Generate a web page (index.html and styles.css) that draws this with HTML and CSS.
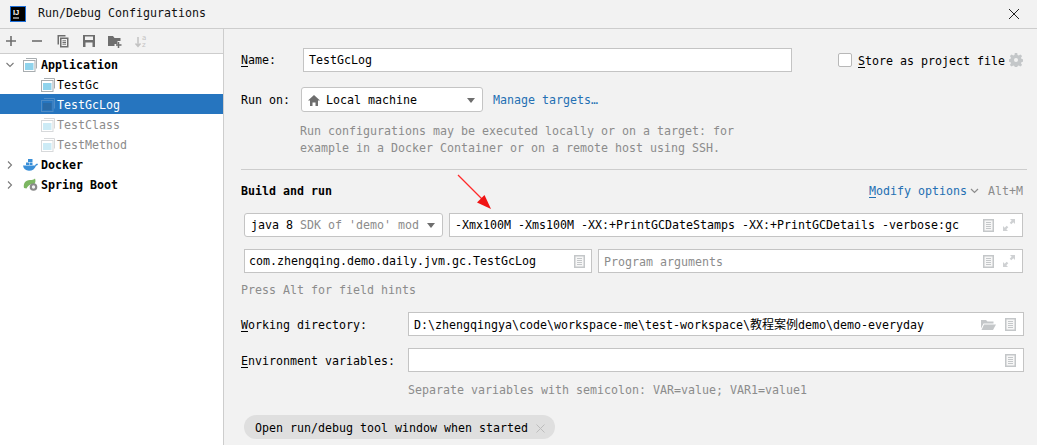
FILE: index.html
```html
<!DOCTYPE html>
<html lang="en">
<head>
<meta charset="utf-8">
<title>Run/Debug Configurations</title>
<link rel="stylesheet" href="styles.css">
</head>
<body>
<div class="dialog">
  <header class="titlebar">
    <svg class="logo" width="16" height="16" viewBox="0 0 16 16"><rect x=".5" y=".5" width="15" height="15" fill="#000" stroke="#1e6fd9"/><text x="3" y="9" class="logo-text">IJ</text><rect x="3" y="11.500" width="6" height="1" fill="#fff"/></svg>
    <span class="title">Run/Debug Configurations</span>
    <svg class="close" width="10" height="10" viewBox="0 0 10 10"><path d="M0 0L10 10M10 0L0 10" stroke="#222" stroke-width="1" fill="none"/></svg>
  </header>
  <div class="main">
    <aside class="sidebar">
      <div class="toolbar">
        <svg width="14" height="14" viewBox="0 0 14 14"><path d="M7 2v10M2 7h10" stroke="#6e6e6e" stroke-width="1.6"/></svg>
        <svg width="14" height="14" viewBox="0 0 14 14"><path d="M2 7h10" stroke="#6e6e6e" stroke-width="1.6"/></svg>
        <svg width="14" height="14" viewBox="0 0 14 14"><path d="M1.500 1h8v1.500h-6.500v8h-1.500z" fill="#6e6e6e"/><path d="M4 3.500h8.500v10h-8.500z" fill="#6e6e6e"/><path d="M5.500 5h5.500v7h-5.500z" fill="#f2f2f2"/><path d="M6.500 6.800h3.500M6.500 8.500h3.500M6.500 10.200h3.500" stroke="#6e6e6e"/></svg>
        <svg width="14" height="14" viewBox="0 0 14 14"><path d="M1 1h12v12h-12z" fill="#6e6e6e"/><path d="M3 2.500h8v3.500h-8zM3.500 8.500h7v4.500h-7z" fill="#f2f2f2"/></svg>
        <svg width="14" height="14" viewBox="0 0 14 14"><path d="M0 2h5l1.500 2h6v3h-3v3h-3v2h-6.500z" fill="#6e6e6e"/><path d="M10.500 8v6M8 11h5.500" stroke="#6e6e6e" stroke-width="1.500"/></svg>
        <svg width="14" height="14" viewBox="0 0 14 14"><path d="M4 3v9M1.500 9.500l2.500 2.800 2.500-2.800" stroke="#c2c2c2" stroke-width="1.500" fill="none"/><text x="8" y="6" class="sort-text">a</text><text x="8" y="13" class="sort-text">z</text></svg>
      </div>
      <ul class="tree">
        <li class="row lvl1 bold"><svg class="chev" width="8" height="8" viewBox="0 0 8 8"><path d="M.5 2l3.500 3.500 3.500-3.500" stroke="#7a7a7a" stroke-width="1.100" fill="none"/></svg><svg class="ic" width="14" height="14" viewBox="0 0 14 14"><use href="#app"/></svg><span>Application</span></li>
        <li class="row lvl2"><svg class="ic" width="14" height="14" viewBox="0 0 14 14"><use href="#app"/></svg><span>TestGc</span></li>
        <li class="row lvl2 selected"><svg class="ic" width="14" height="14" viewBox="0 0 14 14"><path d="M3 0.500h10.500v10" fill="none" stroke="#4f8cc6"/><rect x=".5" y="2.500" width="11.500" height="11" fill="#2675bf" stroke="#4f8cc6"/><rect x="2" y="5" width="8.500" height="7" fill="#2a6aa6"/></svg><span>TestGcLog</span></li>
        <li class="row lvl2 muted"><svg class="ic faded" width="14" height="14" viewBox="0 0 14 14"><use href="#app"/></svg><span>TestClass</span></li>
        <li class="row lvl2 muted"><svg class="ic faded" width="14" height="14" viewBox="0 0 14 14"><use href="#app"/></svg><span>TestMethod</span></li>
        <li class="row lvl1 bold"><svg class="chev" width="8" height="8" viewBox="0 0 8 8"><path d="M2 .5l3.500 3.500-3.500 3.500" stroke="#7a7a7a" stroke-width="1.100" fill="none"/></svg><svg class="ic wide" width="16" height="14" viewBox="0 0 16 14"><path d="M0 7.500h12c.5-1.500 1.800-2 3-1.500-.4 1-1 1.500-2 1.700-1 3-3.500 5-7 5-3.500 0-5.500-2-6-5.200z" fill="#3a8fd8"/><rect x="3" y="4.500" width="3" height="2.500" fill="#3a8fd8"/><rect x="6.500" y="4.500" width="3" height="2.500" fill="#3a8fd8"/><rect x="5" y="1" width="4.500" height="3" fill="#3a8fd8"/></svg><span>Docker</span></li>
        <li class="row lvl1 bold"><svg class="chev" width="8" height="8" viewBox="0 0 8 8"><path d="M2 .5l3.500 3.500-3.500 3.500" stroke="#7a7a7a" stroke-width="1.100" fill="none"/></svg><svg class="ic wide" width="16" height="14" viewBox="0 0 16 14"><path d="M1 10c-1-4 1-8 6-8 2 0 4-.5 5-1.500.8 2 .5 4-.5 5.500h-3c-2 1-4 2-5 4.500z" fill="#7cb661"/><circle cx="10.500" cy="9" r="3.800" fill="#8a8a8a"/><circle cx="10.500" cy="9" r="1.700" fill="#f2f2f2"/></svg><span>Spring Boot</span></li>
      </ul>
    </aside>
    <section class="panel">
      <div class="row-name">
        <label class="lbl lbl-name"><u>N</u>ame:</label>
        <div class="field f-name">TestGcLog</div>
        <div class="store">
          <span class="checkbox"></span>
          <span class="store-text"><u>S</u>tore as project file</span>
          <svg class="gear" width="14" height="14" viewBox="0 0 14 14"><path d="M5.800 0h2.400l.3 1.900 1.300.6 1.600-1.100 1.700 1.700-1.100 1.600.6 1.300 1.900.3v2.400l-1.900.3-.6 1.300 1.100 1.600-1.700 1.700-1.600-1.100-1.300.6-.3 1.900h-2.400l-.3-1.900-1.300-.6-1.600 1.100-1.700-1.700 1.100-1.600-.6-1.300-1.900-.3v-2.400l1.900-.3.6-1.300-1.100-1.600 1.700-1.700 1.600 1.100 1.300-.6z" fill="#c4c7c9"/><circle cx="7" cy="7" r="2" fill="#f2f2f2"/></svg>
        </div>
      </div>
      <div class="row-run">
        <label class="lbl lbl-run">Run on:</label>
        <div class="combo c-run">
          <svg class="home" width="12" height="11" viewBox="0 0 12 11"><path d="M6 0l6 5.500h-2v5.500h-2.500v-3.500h-3v3.500h-2.500v-5.500h-2z" fill="#6e6e6e"/></svg>
          <span>Local machine</span>
          <i class="arrow"></i>
        </div>
        <a class="link">Manage targets…</a>
      </div>
      <p class="hint help">Run configurations may be executed locally or on a target: for<br>example in a Docker Container or on a remote host using SSH.</p>
      <hr class="sep">
      <div class="row-build">
        <strong class="bold">Build and run</strong>
        <div class="modify">
          <a class="link"><u>M</u>odify options</a>
          <svg width="9" height="6" viewBox="0 0 9 6"><path d="M1 1l3.500 3.500 3.500-3.500" stroke="#8c8c8c" stroke-width="1.200" fill="none"/></svg>
          <span class="shortcut">Alt+M</span>
        </div>
      </div>
      <div class="row-fields first">
        <div class="combo c-java"><span>java 8</span><span class="gray sdk">SDK of 'demo' mod</span><i class="arrow"></i></div>
        <div class="field f-grow"><span class="vm">-Xmx100M -Xms100M -XX:+PrintGCDateStamps -XX:+PrintGCDetails -verbose:gc</span>
          <span class="icons">
            <svg width="11" height="13" viewBox="0 0 11 13"><use href="#doc"/></svg>
            <svg width="12" height="12" viewBox="0 0 12 12"><use href="#expand"/></svg>
          </span>
        </div>
      </div>
      <div class="row-fields second">
        <div class="field f-main"><span class="vm">com.zhengqing.demo.daily.jvm.gc.TestGcLog</span><span class="icons"><svg width="11" height="13" viewBox="0 0 11 13"><use href="#doc"/></svg></span></div>
        <div class="field f-grow"><span class="placeholder">Program arguments</span>
          <span class="icons">
            <svg width="11" height="13" viewBox="0 0 11 13"><use href="#doc"/></svg>
            <svg width="12" height="12" viewBox="0 0 12 12"><use href="#expand"/></svg>
          </span>
        </div>
      </div>
      <p class="hint press">Press Alt for field hints</p>
      <div class="row-dir dir">
        <label class="lbl lbl-dir"><u>W</u>orking directory:</label>
        <div class="field f-grow"><span class="vm">D:\zhengqingya\code\workspace-me\test-workspace\<span class="cjk">教程案例</span>demo\demo-everyday</span>
          <span class="icons">
            <svg width="15" height="11" viewBox="0 0 15 11"><path d="M0 1h5l1.500 1.500h6v2h-10l-2.500 5z" fill="#c4c7c9"/><path d="M3 5.500h12l-3 5.500h-11.500z" fill="#c4c7c9"/></svg>
            <svg width="11" height="13" viewBox="0 0 11 13"><use href="#doc"/></svg>
          </span>
        </div>
      </div>
      <div class="row-dir env">
        <label class="lbl lbl-dir"><u>E</u>nvironment variables:</label>
        <div class="field f-grow"><span class="icons"><svg width="11" height="13" viewBox="0 0 11 13"><use href="#doc"/></svg></span></div>
      </div>
      <p class="hint sepvar">Separate variables with semicolon: VAR=value; VAR1=value1</p>
      <div class="chip">Open run/debug tool window when started
        <svg width="9" height="9" viewBox="0 0 9 9"><path d="M.5 .5l8 8M8.500 .5l-8 8" stroke="#bdbdbd" stroke-width="1"/></svg>
      </div>
    </section>
  </div>
  <svg class="red-arrow" width="40" height="40" viewBox="0 0 40 40"><path d="M2 2L28 28" stroke="#ff2a2a" stroke-width="1.200" fill="none"/><path d="M35 36L21 29.500 28.500 22z" fill="#f01414"/></svg>
</div>
<svg class="defs" width="0" height="0">
  <defs>
    <g id="app"><path d="M3 .5h10.500v10" fill="none" stroke="#a8adb0"/><rect x=".5" y="2.500" width="11.500" height="11" fill="#fff" stroke="#a8adb0"/><rect x="2" y="5" width="8.500" height="7" fill="#8fd3ec"/></g>
    <g id="doc"><rect x="0" y="0" width="11" height="13" fill="#c4c7c9"/><rect x="1.500" y="1.500" width="8" height="10" fill="#f7f7f7"/><path d="M3 3.500h5M3 5.500h5M3 7.500h5M3 9.500h5" stroke="#c4c7c9"/></g>
    <g id="expand"><path d="M7 0h5v5l-1.700-1.700-2 2-1.600-1.600 2-2zM0 7l1.700 1.700 2-2 1.600 1.600-2 2L5 12H0z" fill="#cfd1d3"/></g>
  </defs>
</svg>
</body>
</html>
```
FILE: styles.css
```css
* { box-sizing: border-box; }
html, body { margin: 0; padding: 0; }
body {
  width: 1037px; height: 445px; overflow: hidden;
  background: #f2f2f2; color: #000;
  font-family: "DejaVu Sans Mono", "Noto Sans CJK SC", monospace;
  font-size: 11.63px; line-height: 17px;
}
.dialog { position: relative; width: 1037px; height: 445px; display: flex; flex-direction: column; }
.titlebar {
  height: 29px; flex: none; display: flex; align-items: center;
  padding: 0 18px 1px 10px; border-bottom: 1px solid #cdcdcd;
}
.logo { flex: none; }
.logo-text { font-family: "Liberation Sans", sans-serif; font-size: 7.5px; font-weight: 700; fill: #fff; }
.title { margin-left: 12px; color: #111; }
.close { margin-left: auto; }
.main { flex: 1; display: flex; min-height: 0; }
.sidebar { width: 224px; flex: none; border-right: 1px solid #cdcdcd; background: #fff; display: flex; flex-direction: column; }
.toolbar {
  height: 25px; flex: none; background: #f2f2f2; border-bottom: 1px solid #cdcdcd;
  display: flex; align-items: center; gap: 12px; padding-left: 4px;
}
.sort-text { font-family: "DejaVu Sans", sans-serif; font-size: 7px; fill: #c2c2c2; }
.tree { list-style: none; margin: 0; padding: 0; }
.row { height: 20px; display: flex; align-items: center; position: relative; white-space: nowrap; padding-top: 2px; }
.lvl1 { padding-left: 23px; }
.lvl2 { padding-left: 41px; }
.row .ic { flex: none; margin-right: 4px; }
.lvl2 .ic { margin-right: 2px; }
.row .wide { margin-right: 2px; }
.chev { position: absolute; left: 6px; top: 7px; }
.bold { font-weight: 700; }
.selected { background: #2675bf; color: #fff; }
.muted { color: #8c8c8c; }
.faded { opacity: .45; }
.panel { flex: 1; padding: 19px 10px 0 17px; min-width: 0; }
.lbl { display: block; flex: none; white-space: nowrap; }
u { text-underline-offset: 2px; }
.row-name, .row-run, .row-fields, .row-dir { display: flex; align-items: center; height: 24px; }
.row-run { margin-top: 15px; height: 25px; }
.lbl-name { width: 62px; }
.lbl-run { width: 60px; padding-top: 2px; }
.lbl-dir { width: 167px; padding-top: 2px; }
.field {
  height: 24px; background: #fff; border: 1px solid #c4c4c4;
  display: flex; align-items: center; padding: 0 5px; white-space: nowrap; min-width: 0;
}
.f-name { width: 489px; }
.f-main { width: 348px; padding-left: 4px; padding-right: 4px; }
.f-grow { flex: 1; }
.store { display: flex; align-items: center; margin-left: auto; padding-right: 4px; gap: 6px; }
.store-text { padding-top: 2px; }
.gear { margin-left: -2px; }
.checkbox { width: 14px; height: 14px; background: #fff; border: 1px solid #b8b8b8; border-radius: 2px; flex: none; }
.combo {
  height: 100%; background: #fff; border: 1px solid #c4c4c4; border-radius: 3px;
  display: flex; align-items: center; padding: 0 6px; position: relative; white-space: nowrap;
}
.c-run { width: 182px; height: 25px; padding-top: 2px; }
.home { margin: 0 6px 0 0; }
.arrow { position: absolute; right: 7px; top: 50%; margin-top: -2px; width: 0; height: 0; border: 4px solid transparent; border-top: 5px solid #6e6e6e; border-bottom: 0; }
.link { color: #2470b3; white-space: nowrap; }
.c-run + .link { margin-left: 10px; padding-top: 2px; }
.hint { margin: 0; color: #8c8c8c; }
.help { margin: 11px 0 0 59px; }
.sep { margin: 12px 0 0; height: 1px; border: 0; background: #cdcdcd; }
.row-build { display: flex; align-items: center; height: 20px; margin: 10px 4px 0 0; padding-top: 2px; justify-content: space-between; }
.modify { display: flex; align-items: center; gap: 3px; }
.shortcut { color: #8c8c8c; margin-left: 6px; }
.row-fields { margin: 0 4px 0 3px; gap: 6px; }
.first { margin-top: 13px; }
.second { margin-top: 12px; }
.c-java { width: 199px; }
.gray { color: #8c8c8c; }
.sdk { margin-left: 7px; }
.vm { flex: none; }
.placeholder { color: #8c8c8c; padding-top: 2px; }
.icons { margin-left: auto; display: flex; align-items: center; gap: 9px; padding-right: 2px; flex: none; }
.press { margin: 9px 0 0; }
.row-dir { margin-right: 3px; }
.dir { margin-top: 13px; }
.env { margin-top: 12px; }
.cjk { font-family: "Noto Sans CJK SC", sans-serif; font-size: 12px; }
.sepvar { margin: 10px 0 0 167px; }
.chip {
  display: inline-flex; align-items: center; gap: 8px; margin: 16px 0 0 3px; height: 24px;
  padding: 2px 10px 0 11px; background: #dfdfdf; border-radius: 12px; white-space: nowrap;
}
.red-arrow { position: absolute; left: 456px; top: 173px; }
.defs { position: absolute; }
```
